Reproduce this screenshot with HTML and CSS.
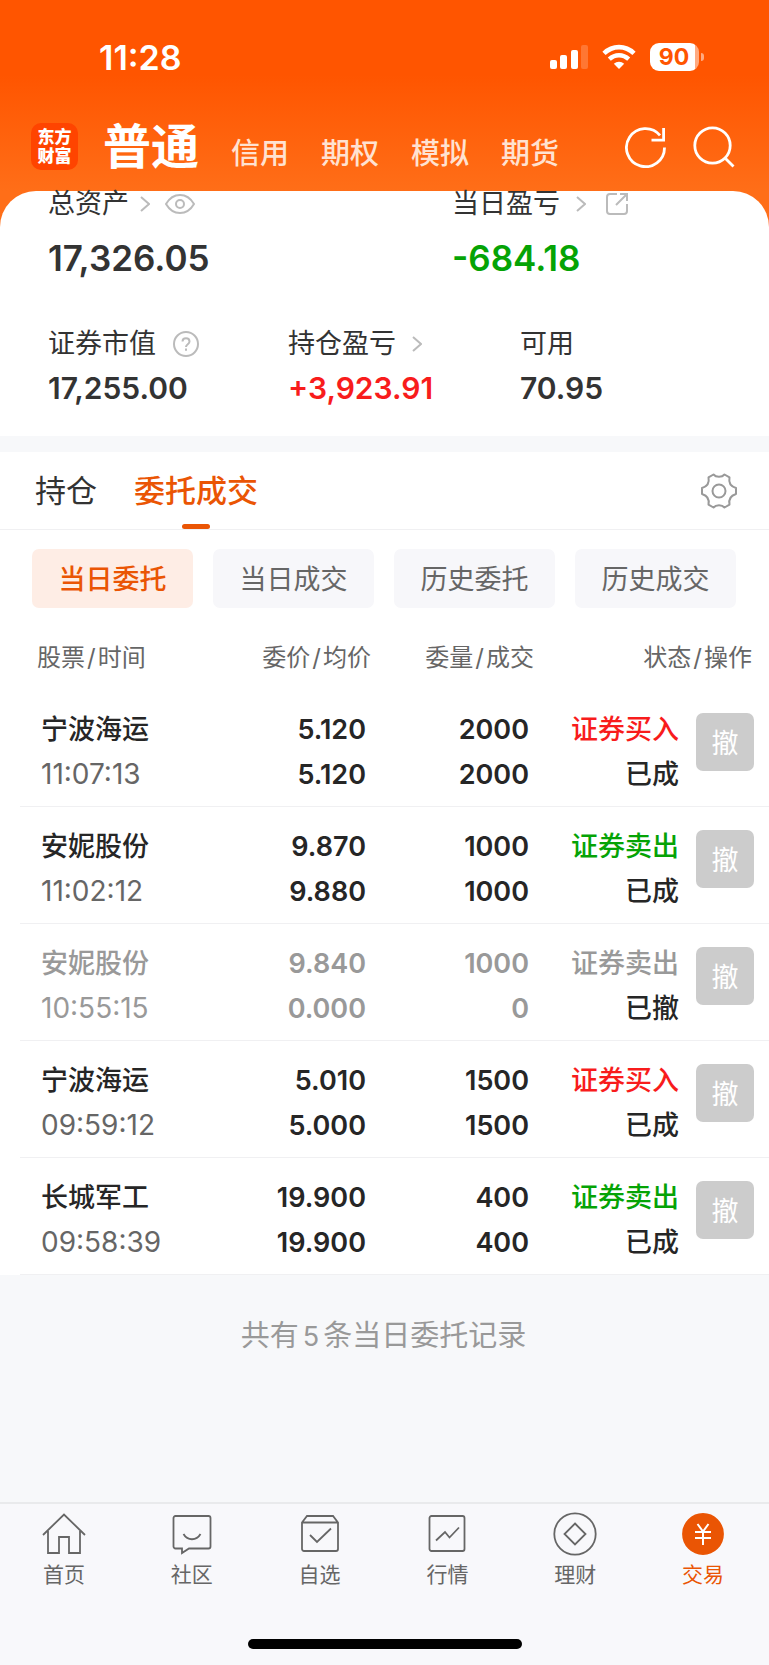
FILE: index.html
```html
<!DOCTYPE html>
<html lang="zh-CN">
<head>
    <meta charset="utf-8">
    <meta name="viewport" content="width=device-width, initial-scale=1">
    <title>普通交易 - 委托成交</title>
    <link rel="stylesheet" href="styles.css">
</head>
<body>
    <div class="top">
        <!-- Status bar -->
        <div class="status-bar">
            <span class="clock">11:28</span>
            <div class="status-icons">
                <svg width="38" height="26" viewBox="0 0 38 26" fill="#fff">
                    <rect x="0" y="16" width="7" height="9" rx="2"/>
                    <rect x="10" y="11" width="7" height="14" rx="2"/>
                    <rect x="21" y="6" width="7" height="19" rx="2"/>
                    <rect x="31" y="1" width="7" height="24" rx="2" opacity="0.2"/>
                </svg>
                <svg width="34" height="26" viewBox="0 0 34 26" fill="none" stroke="#fff">
                    <path d="M2 9.3C10.5 1 23.5 1 32 9.3" stroke-width="4.6"/>
                    <path d="M7.3 15.2C13 9.9 21 9.9 26.7 15.2" stroke-width="4.4"/>
                    <path d="M17 25l-5.2-5.3c3-2.7 7.4-2.7 10.4 0z" fill="#fff" stroke="none"/>
                </svg>
                <div class="battery"><span class="battery-level">90</span></div>
            </div>
        </div>

        <!-- Account types -->
        <header class="header">
            <a class="logo" href="#"><span>东方</span><span>财富</span></a>
            <nav class="account-nav">
                <a class="account active" href="#">普通</a>
                <a class="account" href="#">信用</a>
                <a class="account" href="#">期权</a>
                <a class="account" href="#">模拟</a>
                <a class="account" href="#">期货</a>
            </nav>
            <div class="header-actions">
                <button class="icon-button" aria-label="刷新">
                    <svg width="42" height="42" viewBox="0 0 42 42" fill="none" stroke="#fff" stroke-width="2.8">
                        <path d="M39.5 21.5A19 19 0 1 1 35 9.4"/>
                        <path d="M38.6 2v12.2H26.5"/>
                    </svg>
                </button>
                <button class="icon-button" aria-label="搜索">
                    <svg width="42" height="42" viewBox="0 0 42 42" fill="none" stroke="#fff" stroke-width="2.8">
                        <circle cx="19.5" cy="19.5" r="17.7"/>
                        <path d="M31.5 31.5l9 9"/>
                    </svg>
                </button>
            </div>
        </header>

        <!-- Asset summary -->
        <section class="summary">
            <div class="summary-row two">
                <div>
                    <div class="label">总资产
                        <svg class="chevron near" width="10" height="16" viewBox="0 0 10 16"><path d="M1 1l8 7-8 7"/></svg>
                        <button class="icon-button eye" aria-label="隐藏金额">
                            <svg width="30" height="20" viewBox="0 0 30 20" fill="none" stroke="#bbb" stroke-width="2">
                                <path d="M1 10C4.500 4 9.300 1 15 1s10.500 3 14 9c-3.500 6-8.300 9-14 9S4.500 16 1 10z"/>
                                <circle cx="15" cy="10" r="4"/>
                            </svg>
                        </button>
                    </div>
                    <div class="value big">17,326.05</div>
                </div>
                <div>
                    <div class="label">当日盈亏
                        <svg class="chevron" width="10" height="16" viewBox="0 0 10 16"><path d="M1 1l8 7-8 7"/></svg>
                        <button class="icon-button share" aria-label="分享">
                            <svg width="24" height="24" viewBox="0 0 24 24" fill="none" stroke="#bbb" stroke-width="2">
                                <path d="M12 2H5a3 3 0 0 0-3 3v14a3 3 0 0 0 3 3h14a3 3 0 0 0 3-3v-7"/>
                                <path d="M11 13L22 2M15 2h7v7"/>
                            </svg>
                        </button>
                    </div>
                    <div class="value big green">-684.18</div>
                </div>
            </div>
            <div class="summary-row three">
                <div>
                    <div class="label">证券市值
                        <button class="icon-button help" aria-label="说明">
                            <svg width="26" height="26" viewBox="0 0 26 26" fill="none" stroke="#bbb" stroke-width="2">
                                <circle cx="13" cy="13" r="12"/>
                                <path d="M9.500 10.500c0-4.500 7-4.500 7 0 0 2.700-3.500 2.700-3.500 5.500M13 17.500v2.200"/>
                            </svg>
                        </button>
                    </div>
                    <div class="value">17,255.00</div>
                </div>
                <div>
                    <div class="label">持仓盈亏
                        <svg class="chevron" width="10" height="16" viewBox="0 0 10 16"><path d="M1 1l8 7-8 7"/></svg>
                    </div>
                    <div class="value red">+3,923.91</div>
                </div>
                <div>
                    <div class="label">可用</div>
                    <div class="value">70.95</div>
                </div>
            </div>
        </section>
    </div>

    <!-- Orders -->
    <main class="orders">
        <div class="tabs">
            <button class="tab">持仓</button>
            <button class="tab active">委托成交</button>
            <button class="icon-button settings" aria-label="设置">
                <svg width="36" height="36" viewBox="0 0 36 36" fill="none" stroke="#999" stroke-width="2" stroke-linejoin="round">
                    <path d="M12.500 1.500C15 4.500 21 4.500 23.500 1.500L28.500 4.400C27.500 9.500 30 13.500 35 15V21C30 22.500 27.500 26.500 28.500 31.600L23.500 34.500C21 31.500 15 31.500 12.500 34.500L7.500 31.600C8.500 26.500 6 22.500 1 21V15C6 13.500 8.500 9.500 7.500 4.400Z"/>
                    <circle cx="18" cy="18" r="6.500"/>
                </svg>
            </button>
        </div>

        <div class="chips">
            <button class="chip active">当日委托</button>
            <button class="chip">当日成交</button>
            <button class="chip">历史委托</button>
            <button class="chip">历史成交</button>
        </div>

        <table class="order-table">
            <colgroup>
                <col>
                <col class="col-price">
                <col class="col-amount">
                <col class="col-state">
                <col class="col-action">
            </colgroup>
            <thead>
                <tr>
                    <th>股票<i>/</i>时间</th>
                    <th>委价<i>/</i>均价</th>
                    <th>委量<i>/</i>成交</th>
                    <th colspan="2">状态<i>/</i>操作</th>
                </tr>
            </thead>
            <tbody>
                <tr>
                    <td>宁波海运<span class="time">11:07:13</span></td>
                    <td>5.120<br>5.120</td>
                    <td>2000<br>2000</td>
                    <td><span class="red">证券买入</span><br>已成</td>
                    <td><button class="cancel" disabled>撤</button></td>
                </tr>
                <tr>
                    <td>安妮股份<span class="time">11:02:12</span></td>
                    <td>9.870<br>9.880</td>
                    <td>1000<br>1000</td>
                    <td><span class="green">证券卖出</span><br>已成</td>
                    <td><button class="cancel" disabled>撤</button></td>
                </tr>
                <tr class="cancelled">
                    <td>安妮股份<span class="time">10:55:15</span></td>
                    <td>9.840<br>0.000</td>
                    <td>1000<br>0</td>
                    <td>证券卖出<br><span class="state">已撤</span></td>
                    <td><button class="cancel" disabled>撤</button></td>
                </tr>
                <tr>
                    <td>宁波海运<span class="time">09:59:12</span></td>
                    <td>5.010<br>5.000</td>
                    <td>1500<br>1500</td>
                    <td><span class="red">证券买入</span><br>已成</td>
                    <td><button class="cancel" disabled>撤</button></td>
                </tr>
                <tr>
                    <td>长城军工<span class="time">09:58:39</span></td>
                    <td>19.900<br>19.900</td>
                    <td>400<br>400</td>
                    <td><span class="green">证券卖出</span><br>已成</td>
                    <td><button class="cancel" disabled>撤</button></td>
                </tr>
            </tbody>
        </table>
    </main>

    <p class="total">共有<span>5</span>条当日委托记录</p>

    <!-- Bottom navigation -->
    <footer class="bottom">
        <nav class="bottom-nav">
            <a href="#">
                <svg viewBox="0 0 44 44"><path d="M1 23L22 2.500 43 23M6 19v22h11V25h10v16h11V19"/></svg>
                首页
            </a>
            <a href="#">
                <svg viewBox="0 0 44 44"><path d="M5.500 4h33a2 2 0 0 1 2 2v28.500a2 2 0 0 1-2 2H19L12 41v-4.500H5.500a2 2 0 0 1-2-2V6a2 2 0 0 1 2-2z"/><path d="M13.500 22c4 7 13 7 17 0"/></svg>
                社区
            </a>
            <a href="#">
                <svg viewBox="0 0 44 44"><path d="M4 10.500L9 4h26l5 6.500V37a2 2 0 0 1-2 2H6a2 2 0 0 1-2-2zM4 10.500h36"/><path d="M12 23l7 7 14-13.500"/></svg>
                自选
            </a>
            <a href="#">
                <svg viewBox="0 0 44 44"><rect x="4.500" y="4" width="35" height="35" rx="2"/><path d="M11 28.500l9-8.500 4.500 5.500 9.500-10"/></svg>
                行情
            </a>
            <a href="#">
                <svg viewBox="0 0 44 44"><circle cx="22" cy="22" r="20.700"/><path d="M22 11.500L32.500 22 22 32.500 11.500 22z"/></svg>
                理财
            </a>
            <a class="active" href="#">
                <svg viewBox="0 0 44 44"><circle cx="22" cy="22" r="20" class="coin"/><path class="yen" d="M16.500 12l5.500 7.500 5.500-7.500M22 19.500V33M14 20h16M14 26h16"/></svg>
                交易
            </a>
        </nav>
        <div class="home-indicator"></div>
    </footer>
</body>
</html>
```
FILE: styles.css
```css
* {
    box-sizing: border-box;
}

body {
    font-family: Inter, "Noto Sans CJK SC", sans-serif;
    margin: 0;
    min-height: 100vh;
    display: flex;
    flex-direction: column;
    color: #333;
    background-color: #f7f8fa;
}

a {
    color: inherit;
    text-decoration: none;
}

button {
    font-family: inherit;
    border: none;
    padding: 0;
    background: none;
    cursor: pointer;
}

svg {
    display: block;
    flex: none;
}

.red {
    color: #f81c1c;
}

.green {
    color: #05a305;
}

.icon-button {
    display: block;
}

/* Top */
.top {
    background: linear-gradient(#ff5500 0, #ff5500 75px, #ff6e18 191px);
}

.status-bar {
    display: flex;
    justify-content: space-between;
    align-items: center;
    height: 114px;
    padding: 0 65px 0 99px;
    color: #fff;
}

.clock {
    font-size: 34px;
    font-weight: 600;
}

.status-icons {
    display: flex;
    align-items: center;
    gap: 14px;
}

.battery {
    position: relative;
    width: 49px;
    height: 28px;
    margin-right: 5px;
    border-radius: 9px;
    background: linear-gradient(to right, #fff 45px, #ffaa80 45px);
}

.battery::after {
    content: "";
    position: absolute;
    left: 51px;
    top: 10px;
    width: 3px;
    height: 8px;
    border-radius: 0 3px 3px 0;
    background-color: #ffaa80;
}

.battery-level {
    display: block;
    width: 48px;
    text-align: center;
    font-size: 23px;
    font-weight: 700;
    line-height: 28px;
    color: #ff5500;
}

.header {
    display: flex;
    align-items: center;
    height: 77px;
    padding: 0 34px 12px 31px;
    color: #fff;
}

.logo {
    display: flex;
    flex-direction: column;
    justify-content: center;
    align-items: center;
    width: 47px;
    height: 47px;
    margin-right: 25px;
    border-radius: 10px;
    background-color: #ff4400;
    font-size: 17px;
    font-weight: 900;
    line-height: 19px;
}

.account-nav {
    display: flex;
    align-items: baseline;
    gap: 32px;
    padding-top: 8px;
    line-height: 60px;
}

.account {
    font-size: 29px;
    font-weight: 500;
    color: #ffe2d1;
}

.account.active {
    font-size: 48px;
    font-weight: 700;
    color: #fff;
}

.header-actions {
    display: flex;
    gap: 26px;
    margin-left: auto;
}

/* Summary */
.summary {
    padding: 0 0 28px 48px;
    border-radius: 36px 36px 0 0;
    background-color: #fff;
}

.summary-row {
    display: grid;
}

.summary-row.two {
    grid-template-columns: 404fr 317fr;
}

.summary-row.three {
    grid-template-columns: 240fr 232fr 249fr;
    margin-top: 53px;
}

.label {
    display: flex;
    align-items: center;
    height: 26px;
    font-size: 27px;
    line-height: 26px;
}

.chevron {
    margin-left: 16px;
    fill: none;
    stroke: #bbb;
    stroke-width: 2;
}

.chevron.near {
    margin-left: 11px;
}

.eye {
    margin-left: 15px;
}

.share {
    margin-left: 19px;
}

.help {
    margin-left: 17px;
}

.value {
    margin-top: 11px;
    font-size: 30px;
    font-weight: 600;
    line-height: 40px;
}

.value.big {
    margin-top: 21px;
    font-size: 35px;
}

/* Tabs */
.orders {
    margin-top: 16px;
    background-color: #fff;
}

.tabs {
    display: flex;
    align-items: center;
    gap: 37px;
    height: 78px;
    padding: 0 32px 0 35px;
    border-bottom: 1px solid #f0f0f2;
}

.tab {
    position: relative;
    height: 77px;
    padding-bottom: 4px;
    font-size: 31px;
    color: #333;
}

.tab.active {
    font-weight: 500;
    color: #ea5504;
}

.tab.active::after {
    content: "";
    position: absolute;
    left: 50%;
    bottom: 0;
    width: 28px;
    height: 5px;
    margin-left: -14px;
    border-radius: 3px;
    background-color: #ea5504;
}

.settings {
    margin-left: auto;
}

.chips {
    display: grid;
    grid-template-columns: repeat(4, 1fr);
    gap: 20px;
    padding: 19px 33px 0 32px;
}

.chip {
    height: 59px;
    padding-bottom: 2px;
    border-radius: 7px;
    background-color: #f7f7fa;
    font-size: 27px;
    color: #666;
}

.chip.active {
    background-color: #feede5;
    font-weight: 500;
    color: #ea5504;
}

/* Table */
.order-table {
    width: calc(100% - 20px);
    margin-left: 20px;
    border-collapse: separate;
    border-spacing: 0;
    table-layout: fixed;
}

.col-price {
    width: 160px;
}

.col-amount {
    width: 163px;
}

.col-state {
    width: 150px;
}

.col-action {
    width: 85px;
}

th {
    padding: 35px 0 17px;
    text-align: right;
    font-size: 24px;
    font-weight: 400;
    line-height: 30px;
    color: #666;
}

th i {
    margin: 0 2px;
    font-style: normal;
}

th:first-child {
    padding-left: 17px;
    text-align: left;
}

th:last-child {
    padding-right: 17px;
}

td {
    padding: 17px 5px 9px 0;
    border-bottom: 1px solid #f0f0f2;
    text-align: right;
    vertical-align: top;
    font-size: 27px;
    font-weight: 600;
    line-height: 45px;
    color: #262626;
}

td:first-child {
    padding-left: 21px;
    text-align: left;
    font-weight: 500;
}

td:nth-child(4) {
    font-weight: 500;
}

.time {
    display: block;
    font-size: 28px;
    font-weight: 400;
    color: #666;
}

.cancelled td,
.cancelled .time {
    color: #999;
}

.cancelled .state {
    color: #262626;
}

td:last-child {
    padding: 23px 15px 0 12px;
}

.cancel {
    display: block;
    width: 58px;
    height: 58px;
    padding-bottom: 2px;
    border-radius: 7px;
    background-color: #ccc;
    font-size: 27px;
    color: #fff;
}

.total {
    flex: 1;
    margin: 0;
    padding: 43px 2px 43px 0;
    text-align: center;
    font-size: 29px;
    line-height: 36px;
    color: #999;
}

.total span {
    margin: 0 4px;
    font-size: 27px;
}

/* Bottom navigation */
.bottom {
    border-top: 2px solid #e9eaec;
    background-color: #f8f8fb;
}

.bottom-nav {
    display: flex;
    padding: 8px 2px 0 0;
}

.bottom-nav a {
    flex: 1;
    display: flex;
    flex-direction: column;
    align-items: center;
    gap: 4px;
    font-size: 21px;
    line-height: 30px;
    color: #666;
}

.bottom-nav svg {
    width: 44px;
    height: 44px;
    fill: none;
    stroke: #666;
    stroke-width: 1.8;
}

.bottom-nav a.active {
    color: #ea5504;
}

.bottom-nav .coin {
    fill: #ea5504;
    stroke: #ea5504;
}

.bottom-nav .yen {
    stroke: #fff;
    stroke-width: 2;
}

.home-indicator {
    width: 274px;
    height: 10px;
    margin: 49px auto 16px;
    border-radius: 5px;
    background-color: #000;
}
```
